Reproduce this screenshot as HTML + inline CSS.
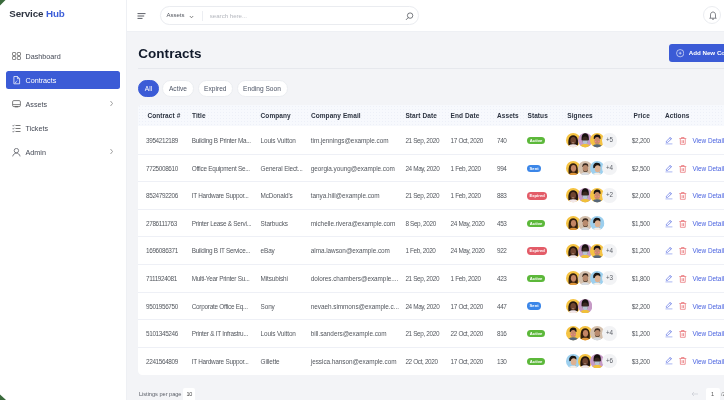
<!DOCTYPE html>
<html><head><meta charset="utf-8">
<style>
*{box-sizing:border-box;margin:0;padding:0}
html,body{width:724px;height:400px;overflow:hidden}
body{position:relative;background:#f3f4f7;will-change:transform;font-family:"Liberation Sans",sans-serif;color:#333}
.abs{position:absolute}
#side{position:absolute;left:0;top:0;width:127px;height:400px;background:#fff;border-right:1px solid #eef0f4}
.logo{position:absolute;left:9.3px;top:8.2px;font-size:9.8px;font-weight:bold;color:#2e3441;letter-spacing:-0.12px;white-space:nowrap}
.logo span{color:#3c5ed8}
.nav{position:absolute;left:6px;width:114.2px;height:17.9px;border-radius:2.5px;font-size:7.2px;color:#444955;white-space:nowrap}
.nav .lbl{position:absolute;left:19.5px;top:4.5px}
.nav.active{background:#3b5bd6;color:#fff}
.nav svg{position:absolute;left:6px;top:4.5px}
.nav .chev{position:absolute;left:103px;top:5px}
#hdr{position:absolute;left:127px;top:0;width:597px;height:32px;background:#fff;border-bottom:1px solid #eef0f4}
.search{position:absolute;left:160.4px;top:6.4px;width:258.6px;height:18.6px;border:1px solid #eaecf0;border-radius:9.3px;background:#fff}
.title{position:absolute;left:138.2px;top:45.9px;font-size:13.5px;font-weight:bold;color:#111a2b;letter-spacing:0.05px}
.hr{position:absolute;left:138px;top:68px;width:586px;height:1px;background:#e6e8ed}
.addbtn{position:absolute;left:669.3px;top:44.3px;width:80px;height:17.6px;background:#3b5bd6;border-radius:3px;color:#fff;font-size:6.2px;font-weight:bold;white-space:nowrap}
.pill{position:absolute;top:80px;height:16.6px;border-radius:8.3px;background:#fff;border:1px solid #eaecf0;font-size:6.6px;color:#4d5566;text-align:center;line-height:16.2px;white-space:nowrap}
.pill.on{background:#3b5bd6;border-color:#3b5bd6;color:#fff}
#card{position:absolute;left:138.3px;top:105.2px;width:600px;height:269.6px;background:#fff;border-radius:4.5px;overflow:hidden}
#thead{position:absolute;left:0;top:0;width:100%;height:21.3px;background-color:#f7f9fd;background-image:radial-gradient(circle,#edf0f8 0.6px,transparent 0.9px);background-size:3px 3px}
.th{position:absolute;top:105.3px;height:21px;line-height:21px;font-size:6.5px;font-weight:bold;color:#2c3340;white-space:nowrap;letter-spacing:0.08px}
.row{position:absolute;left:0;width:724px;height:27.53px}
.row .sep{position:absolute;left:138.3px;right:0;top:27px;height:1px;background:#eef0f6}
.t{position:absolute;top:0.4px;height:27.5px;line-height:27.5px;font-size:6.4px;color:#54585f;white-space:nowrap}
.dg{letter-spacing:-0.38px}
.co{letter-spacing:-0.12px}
.em{letter-spacing:-0.04px}
.dg2{letter-spacing:-0.36px}
.ti{letter-spacing:-0.26px}
.price{text-align:right;letter-spacing:-0.24px}
.vd{color:#4a63e0}
.badge{position:absolute;top:10.3px;height:7.4px;border-radius:3.7px;color:#fff;font-size:4.2px;font-weight:bold;line-height:7.4px;text-align:center}
.ba{background:#5cb83a;width:18px}
.bs{background:#3b86e8;width:14px}
.be{background:#e35c68;width:20px}
.avs{position:absolute;top:6.5px;height:14.4px;display:flex}
.av{display:block;width:14.4px;height:14.4px;margin-right:-2.3px;flex:none}
.more{display:block;width:14.4px;height:14.4px;border-radius:50%;background:#f2f3f5;color:#5a5e66;font-size:6.3px;text-align:center;line-height:14.4px;flex:none}
.ic{position:absolute;top:10.2px;width:8px;height:8px}
.ic svg{display:block}
</style></head><body>
<svg width="0" height="0" style="position:absolute"><defs><clipPath id="cc"><circle cx="10" cy="10" r="10"/></clipPath></defs></svg>
<div id="side">
  <div class="logo">Service <span>Hub</span></div>
  <div class="nav" style="top:47px">
    <svg width="9" height="8" viewBox="0 0 9 8"><rect x="0.5" y="0.5" width="3.2" height="3" rx="0.6" fill="none" stroke="#555" stroke-width="0.7"/><rect x="5.3" y="0.5" width="3.2" height="3" rx="0.6" fill="none" stroke="#555" stroke-width="0.7"/><rect x="0.5" y="4.5" width="3.2" height="3" rx="0.6" fill="none" stroke="#555" stroke-width="0.7"/><rect x="5.3" y="4.5" width="3.2" height="3" rx="0.6" fill="none" stroke="#555" stroke-width="0.7"/></svg>
    <span class="lbl">Dashboard</span></div>
  <div class="nav active" style="top:71px">
    <svg width="8" height="9" viewBox="0 0 8 9" style="left:6.6px;top:5px"><path d="M0.9 0.5 H4.6 L6.6 2.5 V7.8 H0.9 Z M4.4 0.6 V2.7 H6.5" fill="none" stroke="#fff" stroke-width="0.75" stroke-linejoin="round"/><path d="M2.2 6.6 L4.4 4.5 M2.2 6.6 H3.2" stroke="#fff" stroke-width="0.6"/></svg>
    <span class="lbl">Contracts</span></div>
  <div class="nav" style="top:95px">
    <svg width="9" height="9" viewBox="0 0 9 9"><rect x="0.6" y="0.6" width="7.8" height="6" rx="1.2" fill="none" stroke="#555" stroke-width="0.75"/><path d="M0.8 4.6 H8.2" stroke="#555" stroke-width="0.7"/><path d="M2.8 6.8 H6.2" stroke="#555" stroke-width="0.9"/></svg>
    <span class="lbl">Assets</span>
    <svg class="chev" width="5" height="7" viewBox="0 0 5 7"><path d="M1.5 1 L3.5 3.5 L1.5 6" fill="none" stroke="#777" stroke-width="0.7"/></svg></div>
  <div class="nav" style="top:119px">
    <svg width="9" height="9" viewBox="0 0 9 9"><path d="M3.5 1.5 H8.5 M3.5 4.5 H8.5 M3.5 7.5 H8.5" stroke="#555" stroke-width="0.8"/><path d="M0.6 1.6 L1.2 2.2 L2.4 0.8 M0.6 4.6 L1.2 5.2 L2.4 3.8 M0.6 7.6 L1.2 8.2 L2.4 6.8" fill="none" stroke="#4a4e56" stroke-width="0.7"/></svg>
    <span class="lbl">Tickets</span></div>
  <div class="nav" style="top:143px">
    <svg width="9" height="9" viewBox="0 0 9 9"><circle cx="4.4" cy="2.6" r="2.2" fill="none" stroke="#4a4e56" stroke-width="0.7"/><path d="M0.7 8.4 C1.1 6.3 2.6 5.2 4.4 5.2 C6.2 5.2 7.7 6.3 8.1 8.4" fill="none" stroke="#4a4e56" stroke-width="0.7"/></svg>
    <span class="lbl">Admin</span>
    <svg class="chev" width="5" height="7" viewBox="0 0 5 7"><path d="M1.5 1 L3.5 3.5 L1.5 6" fill="none" stroke="#777" stroke-width="0.7"/></svg></div>
</div>
<div id="hdr"></div>
<svg class="abs" style="left:137px;top:12.5px" width="9" height="6" viewBox="0 0 9 6"><path d="M0.5 0.6 H8.5 M0.5 3 H7.2 M0.5 5.4 H5.5" stroke="#3d414a" stroke-width="0.85"/></svg>
<div class="search">
  <span class="abs" style="left:5px;top:4.9px;font-size:6px;color:#50545c">Assets</span>
  <svg class="abs" style="left:27.3px;top:7.2px" width="5" height="4" viewBox="0 0 5 4"><path d="M0.8 1 L2.5 2.8 L4.2 1" fill="none" stroke="#555" stroke-width="0.7"/></svg>
  <div class="abs" style="left:40.6px;top:3.4px;width:1px;height:10.6px;background:#eceef2"></div>
  <span class="abs" style="left:48.4px;top:4.8px;font-size:6.1px;color:#b3b6bd">search here...</span>
  <svg class="abs" style="left:243.6px;top:4.2px" width="9" height="9" viewBox="0 0 9 9"><circle cx="5.1" cy="3.6" r="2.7" fill="none" stroke="#3f434b" stroke-width="0.7"/><path d="M3.2 5.6 L1 7.9" stroke="#3f434b" stroke-width="0.7"/></svg>
</div>
<div class="abs" style="left:703.4px;top:6.2px;width:18px;height:18px;border-radius:50%;border:1px solid #eaecf0;background:#fff"></div>
<svg class="abs" style="left:708.6px;top:10.6px" width="8" height="9" viewBox="0 0 8 9"><path d="M1.5 6.6 V3.9 C1.5 2.2 2.5 1 4 1 C5.5 1 6.5 2.2 6.5 3.9 V6.6 L7.3 7.2 H0.7 Z" fill="none" stroke="#3f434b" stroke-width="0.65" stroke-linejoin="round"/><path d="M3.1 8.2 H4.9" stroke="#3f434b" stroke-width="0.7"/></svg>

<div class="title">Contracts</div>
<div class="hr"></div>
<div class="addbtn">
  <svg class="abs" style="left:6.5px;top:5px" width="8.4" height="8.4" viewBox="0 0 9 9"><circle cx="4.5" cy="4.5" r="3.9" fill="none" stroke="#fff" stroke-width="0.65"/><path d="M4.5 2.9 V6.1 M2.9 4.5 H6.1" stroke="#fff" stroke-width="0.6"/></svg>
  <span class="abs" style="left:19.4px;top:5.2px">Add New Contract</span>
</div>
<div class="pill on" style="left:138px;width:21px">All</div>
<div class="pill" style="left:162.2px;width:31.5px">Active</div>
<div class="pill" style="left:197.9px;width:34.8px">Expired</div>
<div class="pill" style="left:236.5px;width:51px">Ending Soon</div>

<div id="card"><div id="thead"></div></div>
<div class="th" style="left:147.4px">Contract #</div>
<div class="th" style="left:192px">Title</div>
<div class="th" style="left:260.6px">Company</div>
<div class="th" style="left:310.9px">Company Email</div>
<div class="th" style="left:405.4px">Start Date</div>
<div class="th" style="left:450.6px">End Date</div>
<div class="th" style="left:497px">Assets</div>
<div class="th" style="left:527.5px">Status</div>
<div class="th" style="left:567.3px">Signees</div>
<div class="th" style="left:633.6px">Price</div>
<div class="th" style="left:665px">Actions</div>
<div class="row" style="top:126.80px"><div class="t dg" style="left:146.1px">3954212189</div><div class="t ti" style="left:191.7px">Building B Printer Ma...</div><div class="t co" style="left:260.6px">Louis Vuitton</div><div class="t em" style="left:310.8px">tim.jennings@example.com</div><div class="t dg2" style="left:405.4px">21 Sep, 2020</div><div class="t dg2" style="left:450.6px">17 Oct, 2020</div><div class="t dg" style="left:497px">740</div><div class="badge ba" style="left:527.1px">Active</div><div class="avs" style="left:566px"><svg class="av" viewBox="0 0 20 20"><g clip-path="url(#cc)"><rect width="20" height="20" fill="#f5c343"/><path d="M3.6 17 C2.5 11 3.5 3.2 10 3 C16.5 3.2 17.5 11 16.4 17 Z" fill="#24160f"/><ellipse cx="10" cy="10.4" rx="3.9" ry="4.9" fill="#6f4430"/><path d="M8.6 13.2 Q10 14 11.4 13.2" stroke="#e8d8d0" stroke-width="0.6" fill="none"/><path d="M2.5 21 C3.5 16.5 6.5 15.6 10 15.6 C13.5 15.6 16.5 16.5 17.5 21 Z" fill="#f1e6e8"/></g></svg><svg class="av" viewBox="0 0 20 20"><g clip-path="url(#cc)"><rect width="20" height="20" fill="#c69ac6"/><path d="M5 10 C4.5 2.5 7 0.5 10 0.5 C13 0.5 15.5 2.5 15 10 Z" fill="#17110e"/><ellipse cx="10" cy="9.8" rx="3.9" ry="5" fill="#3b2820"/><path d="M6.2 10.3 H13.8 C13.7 14.2 12.2 15.4 10 15.4 C7.8 15.4 6.3 14.2 6.2 10.3 Z" fill="#b6c3d0"/><path d="M2 21 C3 16.2 6.5 15.4 10 15.4 C13.5 15.4 17 16.2 18 21 Z" fill="#f0c03a"/></g></svg><svg class="av" viewBox="0 0 20 20"><g clip-path="url(#cc)"><rect width="20" height="20" fill="#f5c343"/><path d="M5.2 8.5 C4.8 3.5 7.2 2.2 10.2 2.2 C13.5 2.2 15.2 4 14.6 8.5 Z" fill="#1b1411"/><ellipse cx="10" cy="10.6" rx="3.9" ry="4.9" fill="#c98b6a"/><circle cx="7.7" cy="11.8" r="1.1" fill="#f0868a"/><circle cx="12.3" cy="11.8" r="1.1" fill="#f0868a"/><path d="M2.5 21 C3.5 16.6 6.5 15.8 10 15.8 C13.5 15.8 16.5 16.6 17.5 21 Z" fill="#56677a"/></g></svg><span class="more">+5</span></div><div class="t price" style="right:74.10000000000002px">$2,200</div><div class="ic" style="left:665px"><svg width="8" height="8" viewBox="0 0 8 8"><path d="M1.3 5.4 V4.3 L5.3 0.4 L6.7 1.7 L2.6 5.4 Z M4.6 1.1 L6 2.4" fill="none" stroke="#4a62e0" stroke-width="0.62" stroke-linejoin="round"/><path d="M0.5 6.9 H7.4" stroke="#4a62e0" stroke-width="0.55" opacity="0.85"/></svg></div><div class="ic" style="left:678.5px"><svg width="8" height="8" viewBox="0 0 8 8"><path d="M0.3 1.5 H7.3 M2.5 1.4 V0.5 H5.1 V1.4 M1.3 2 L1.4 7.3 H6.2 L6.3 2 M3.1 3.2 V6 M4.5 3.2 V6" fill="none" stroke="#e4555a" stroke-width="0.62" stroke-linejoin="round"/></svg></div><div class="t vd" style="left:692.4px">View Details</div><div class="sep"></div></div><div class="row" style="top:154.36px"><div class="t dg" style="left:146.1px">7725008610</div><div class="t ti" style="left:191.7px">Office Equipment Se...</div><div class="t co" style="left:260.6px">General Elect...</div><div class="t em" style="left:310.8px">georgia.young@example.com</div><div class="t dg2" style="left:405.4px">24 May, 2020</div><div class="t dg2" style="left:450.6px">1 Feb, 2020</div><div class="t dg" style="left:497px">994</div><div class="badge bs" style="left:527.1px">Sent</div><div class="avs" style="left:566px"><svg class="av" viewBox="0 0 20 20"><g clip-path="url(#cc)"><rect width="20" height="20" fill="#f5c343"/><path d="M3.8 18 C3 11 3.5 3 10 3 C16.5 3 17 11 16.2 18 Z" fill="#34200f"/><ellipse cx="10.4" cy="10.2" rx="3.6" ry="4.8" fill="#c48564"/><path d="M2.5 21 C4 16.8 7 16.2 10 16.2 C13 16.2 16 16.8 17.5 21 Z" fill="#df963a"/></g></svg><svg class="av" viewBox="0 0 20 20"><g clip-path="url(#cc)"><rect width="20" height="20" fill="#d4c0ad"/><path d="M6 8.2 C6 3.8 7.8 3 10.5 3 C13.3 3 14.5 4.5 14.2 8.2 Z" fill="#3a291f"/><ellipse cx="10.3" cy="10.2" rx="3.8" ry="4.8" fill="#b88a6d"/><path d="M6.6 11.5 C7.2 15.2 13.2 15.2 14 11.5 L13.6 14 C12.5 15.8 8.2 15.8 7.1 14 Z" fill="#56402f"/><path d="M2.5 21 C3.5 16.8 6.8 16 10 16 C13.2 16 16.5 16.8 17.5 21 Z" fill="#d6dbe1"/></g></svg><svg class="av" viewBox="0 0 20 20"><g clip-path="url(#cc)"><rect width="20" height="20" fill="#9ccfee"/><path d="M4.6 10 C3.8 4.5 6.5 2.6 9.6 2.6 C13 2.6 15 4 14.4 7.5 Z" fill="#1a1614"/><ellipse cx="10.6" cy="10.8" rx="4" ry="5" fill="#ddb191"/><path d="M9.5 15.5 C10.5 17 12.5 17.5 13.5 15 L14 17.5 L10 18 Z" fill="#d4a586"/><path d="M2.5 21 C4 17 7 16.4 10 16.4 C13 16.4 16 17 17.5 21 Z" fill="#f3efe9"/></g></svg><span class="more">+4</span></div><div class="t price" style="right:74.10000000000002px">$2,500</div><div class="ic" style="left:665px"><svg width="8" height="8" viewBox="0 0 8 8"><path d="M1.3 5.4 V4.3 L5.3 0.4 L6.7 1.7 L2.6 5.4 Z M4.6 1.1 L6 2.4" fill="none" stroke="#4a62e0" stroke-width="0.62" stroke-linejoin="round"/><path d="M0.5 6.9 H7.4" stroke="#4a62e0" stroke-width="0.55" opacity="0.85"/></svg></div><div class="ic" style="left:678.5px"><svg width="8" height="8" viewBox="0 0 8 8"><path d="M0.3 1.5 H7.3 M2.5 1.4 V0.5 H5.1 V1.4 M1.3 2 L1.4 7.3 H6.2 L6.3 2 M3.1 3.2 V6 M4.5 3.2 V6" fill="none" stroke="#e4555a" stroke-width="0.62" stroke-linejoin="round"/></svg></div><div class="t vd" style="left:692.4px">View Details</div><div class="sep"></div></div><div class="row" style="top:181.92px"><div class="t dg" style="left:146.1px">8524792206</div><div class="t ti" style="left:191.7px">IT Hardware Suppor...</div><div class="t co" style="left:260.6px">McDonald's</div><div class="t em" style="left:310.8px">tanya.hill@example.com</div><div class="t dg2" style="left:405.4px">21 Sep, 2020</div><div class="t dg2" style="left:450.6px">1 Feb, 2020</div><div class="t dg" style="left:497px">883</div><div class="badge be" style="left:527.1px">Expired</div><div class="avs" style="left:566px"><svg class="av" viewBox="0 0 20 20"><g clip-path="url(#cc)"><rect width="20" height="20" fill="#f5c343"/><path d="M3.6 17 C2.5 11 3.5 3.2 10 3 C16.5 3.2 17.5 11 16.4 17 Z" fill="#24160f"/><ellipse cx="10" cy="10.4" rx="3.9" ry="4.9" fill="#6f4430"/><path d="M8.6 13.2 Q10 14 11.4 13.2" stroke="#e8d8d0" stroke-width="0.6" fill="none"/><path d="M2.5 21 C3.5 16.5 6.5 15.6 10 15.6 C13.5 15.6 16.5 16.5 17.5 21 Z" fill="#f1e6e8"/></g></svg><svg class="av" viewBox="0 0 20 20"><g clip-path="url(#cc)"><rect width="20" height="20" fill="#c69ac6"/><path d="M5 10 C4.5 2.5 7 0.5 10 0.5 C13 0.5 15.5 2.5 15 10 Z" fill="#17110e"/><ellipse cx="10" cy="9.8" rx="3.9" ry="5" fill="#3b2820"/><path d="M6.2 10.3 H13.8 C13.7 14.2 12.2 15.4 10 15.4 C7.8 15.4 6.3 14.2 6.2 10.3 Z" fill="#b6c3d0"/><path d="M2 21 C3 16.2 6.5 15.4 10 15.4 C13.5 15.4 17 16.2 18 21 Z" fill="#f0c03a"/></g></svg><svg class="av" viewBox="0 0 20 20"><g clip-path="url(#cc)"><rect width="20" height="20" fill="#f5c343"/><path d="M5.2 8.5 C4.8 3.5 7.2 2.2 10.2 2.2 C13.5 2.2 15.2 4 14.6 8.5 Z" fill="#1b1411"/><ellipse cx="10" cy="10.6" rx="3.9" ry="4.9" fill="#c98b6a"/><circle cx="7.7" cy="11.8" r="1.1" fill="#f0868a"/><circle cx="12.3" cy="11.8" r="1.1" fill="#f0868a"/><path d="M2.5 21 C3.5 16.6 6.5 15.8 10 15.8 C13.5 15.8 16.5 16.6 17.5 21 Z" fill="#56677a"/></g></svg><span class="more">+2</span></div><div class="t price" style="right:74.10000000000002px">$2,000</div><div class="ic" style="left:665px"><svg width="8" height="8" viewBox="0 0 8 8"><path d="M1.3 5.4 V4.3 L5.3 0.4 L6.7 1.7 L2.6 5.4 Z M4.6 1.1 L6 2.4" fill="none" stroke="#4a62e0" stroke-width="0.62" stroke-linejoin="round"/><path d="M0.5 6.9 H7.4" stroke="#4a62e0" stroke-width="0.55" opacity="0.85"/></svg></div><div class="ic" style="left:678.5px"><svg width="8" height="8" viewBox="0 0 8 8"><path d="M0.3 1.5 H7.3 M2.5 1.4 V0.5 H5.1 V1.4 M1.3 2 L1.4 7.3 H6.2 L6.3 2 M3.1 3.2 V6 M4.5 3.2 V6" fill="none" stroke="#e4555a" stroke-width="0.62" stroke-linejoin="round"/></svg></div><div class="t vd" style="left:692.4px">View Details</div><div class="sep"></div></div><div class="row" style="top:209.48px"><div class="t dg" style="left:146.1px">2786111763</div><div class="t ti" style="left:191.7px">Printer Lease & Servi...</div><div class="t co" style="left:260.6px">Starbucks</div><div class="t em" style="left:310.8px">michelle.rivera@example.com</div><div class="t dg2" style="left:405.4px">8 Sep, 2020</div><div class="t dg2" style="left:450.6px">24 May, 2020</div><div class="t dg" style="left:497px">453</div><div class="badge ba" style="left:527.1px">Active</div><div class="avs" style="left:566px"><svg class="av" viewBox="0 0 20 20"><g clip-path="url(#cc)"><rect width="20" height="20" fill="#f5c343"/><path d="M3.8 18 C3 11 3.5 3 10 3 C16.5 3 17 11 16.2 18 Z" fill="#34200f"/><ellipse cx="10.4" cy="10.2" rx="3.6" ry="4.8" fill="#c48564"/><path d="M2.5 21 C4 16.8 7 16.2 10 16.2 C13 16.2 16 16.8 17.5 21 Z" fill="#df963a"/></g></svg><svg class="av" viewBox="0 0 20 20"><g clip-path="url(#cc)"><rect width="20" height="20" fill="#d4c0ad"/><path d="M6 8.2 C6 3.8 7.8 3 10.5 3 C13.3 3 14.5 4.5 14.2 8.2 Z" fill="#3a291f"/><ellipse cx="10.3" cy="10.2" rx="3.8" ry="4.8" fill="#b88a6d"/><path d="M6.6 11.5 C7.2 15.2 13.2 15.2 14 11.5 L13.6 14 C12.5 15.8 8.2 15.8 7.1 14 Z" fill="#56402f"/><path d="M2.5 21 C3.5 16.8 6.8 16 10 16 C13.2 16 16.5 16.8 17.5 21 Z" fill="#d6dbe1"/></g></svg><svg class="av" viewBox="0 0 20 20"><g clip-path="url(#cc)"><rect width="20" height="20" fill="#9ccfee"/><path d="M4.6 10 C3.8 4.5 6.5 2.6 9.6 2.6 C13 2.6 15 4 14.4 7.5 Z" fill="#1a1614"/><ellipse cx="10.6" cy="10.8" rx="4" ry="5" fill="#ddb191"/><path d="M9.5 15.5 C10.5 17 12.5 17.5 13.5 15 L14 17.5 L10 18 Z" fill="#d4a586"/><path d="M2.5 21 C4 17 7 16.4 10 16.4 C13 16.4 16 17 17.5 21 Z" fill="#f3efe9"/></g></svg></div><div class="t price" style="right:74.10000000000002px">$1,500</div><div class="ic" style="left:665px"><svg width="8" height="8" viewBox="0 0 8 8"><path d="M1.3 5.4 V4.3 L5.3 0.4 L6.7 1.7 L2.6 5.4 Z M4.6 1.1 L6 2.4" fill="none" stroke="#4a62e0" stroke-width="0.62" stroke-linejoin="round"/><path d="M0.5 6.9 H7.4" stroke="#4a62e0" stroke-width="0.55" opacity="0.85"/></svg></div><div class="ic" style="left:678.5px"><svg width="8" height="8" viewBox="0 0 8 8"><path d="M0.3 1.5 H7.3 M2.5 1.4 V0.5 H5.1 V1.4 M1.3 2 L1.4 7.3 H6.2 L6.3 2 M3.1 3.2 V6 M4.5 3.2 V6" fill="none" stroke="#e4555a" stroke-width="0.62" stroke-linejoin="round"/></svg></div><div class="t vd" style="left:692.4px">View Details</div><div class="sep"></div></div><div class="row" style="top:237.04px"><div class="t dg" style="left:146.1px">1696086371</div><div class="t ti" style="left:191.7px">Building B IT Service...</div><div class="t co" style="left:260.6px">eBay</div><div class="t em" style="left:310.8px">alma.lawson@example.com</div><div class="t dg2" style="left:405.4px">1 Feb, 2020</div><div class="t dg2" style="left:450.6px">24 May, 2020</div><div class="t dg" style="left:497px">922</div><div class="badge be" style="left:527.1px">Expired</div><div class="avs" style="left:566px"><svg class="av" viewBox="0 0 20 20"><g clip-path="url(#cc)"><rect width="20" height="20" fill="#f5c343"/><path d="M3.6 17 C2.5 11 3.5 3.2 10 3 C16.5 3.2 17.5 11 16.4 17 Z" fill="#24160f"/><ellipse cx="10" cy="10.4" rx="3.9" ry="4.9" fill="#6f4430"/><path d="M8.6 13.2 Q10 14 11.4 13.2" stroke="#e8d8d0" stroke-width="0.6" fill="none"/><path d="M2.5 21 C3.5 16.5 6.5 15.6 10 15.6 C13.5 15.6 16.5 16.5 17.5 21 Z" fill="#f1e6e8"/></g></svg><svg class="av" viewBox="0 0 20 20"><g clip-path="url(#cc)"><rect width="20" height="20" fill="#c69ac6"/><path d="M5 10 C4.5 2.5 7 0.5 10 0.5 C13 0.5 15.5 2.5 15 10 Z" fill="#17110e"/><ellipse cx="10" cy="9.8" rx="3.9" ry="5" fill="#3b2820"/><path d="M6.2 10.3 H13.8 C13.7 14.2 12.2 15.4 10 15.4 C7.8 15.4 6.3 14.2 6.2 10.3 Z" fill="#b6c3d0"/><path d="M2 21 C3 16.2 6.5 15.4 10 15.4 C13.5 15.4 17 16.2 18 21 Z" fill="#f0c03a"/></g></svg><svg class="av" viewBox="0 0 20 20"><g clip-path="url(#cc)"><rect width="20" height="20" fill="#f5c343"/><path d="M5.2 8.5 C4.8 3.5 7.2 2.2 10.2 2.2 C13.5 2.2 15.2 4 14.6 8.5 Z" fill="#1b1411"/><ellipse cx="10" cy="10.6" rx="3.9" ry="4.9" fill="#c98b6a"/><circle cx="7.7" cy="11.8" r="1.1" fill="#f0868a"/><circle cx="12.3" cy="11.8" r="1.1" fill="#f0868a"/><path d="M2.5 21 C3.5 16.6 6.5 15.8 10 15.8 C13.5 15.8 16.5 16.6 17.5 21 Z" fill="#56677a"/></g></svg><span class="more">+4</span></div><div class="t price" style="right:74.10000000000002px">$1,200</div><div class="ic" style="left:665px"><svg width="8" height="8" viewBox="0 0 8 8"><path d="M1.3 5.4 V4.3 L5.3 0.4 L6.7 1.7 L2.6 5.4 Z M4.6 1.1 L6 2.4" fill="none" stroke="#4a62e0" stroke-width="0.62" stroke-linejoin="round"/><path d="M0.5 6.9 H7.4" stroke="#4a62e0" stroke-width="0.55" opacity="0.85"/></svg></div><div class="ic" style="left:678.5px"><svg width="8" height="8" viewBox="0 0 8 8"><path d="M0.3 1.5 H7.3 M2.5 1.4 V0.5 H5.1 V1.4 M1.3 2 L1.4 7.3 H6.2 L6.3 2 M3.1 3.2 V6 M4.5 3.2 V6" fill="none" stroke="#e4555a" stroke-width="0.62" stroke-linejoin="round"/></svg></div><div class="t vd" style="left:692.4px">View Details</div><div class="sep"></div></div><div class="row" style="top:264.60px"><div class="t dg" style="left:146.1px">7111924081</div><div class="t ti" style="left:191.7px">Multi-Year Printer Su...</div><div class="t co" style="left:260.6px">Mitsubishi</div><div class="t em" style="left:310.8px">dolores.chambers@example....</div><div class="t dg2" style="left:405.4px">21 Sep, 2020</div><div class="t dg2" style="left:450.6px">1 Feb, 2020</div><div class="t dg" style="left:497px">423</div><div class="badge ba" style="left:527.1px">Active</div><div class="avs" style="left:566px"><svg class="av" viewBox="0 0 20 20"><g clip-path="url(#cc)"><rect width="20" height="20" fill="#f5c343"/><path d="M3.8 18 C3 11 3.5 3 10 3 C16.5 3 17 11 16.2 18 Z" fill="#34200f"/><ellipse cx="10.4" cy="10.2" rx="3.6" ry="4.8" fill="#c48564"/><path d="M2.5 21 C4 16.8 7 16.2 10 16.2 C13 16.2 16 16.8 17.5 21 Z" fill="#df963a"/></g></svg><svg class="av" viewBox="0 0 20 20"><g clip-path="url(#cc)"><rect width="20" height="20" fill="#d4c0ad"/><path d="M6 8.2 C6 3.8 7.8 3 10.5 3 C13.3 3 14.5 4.5 14.2 8.2 Z" fill="#3a291f"/><ellipse cx="10.3" cy="10.2" rx="3.8" ry="4.8" fill="#b88a6d"/><path d="M6.6 11.5 C7.2 15.2 13.2 15.2 14 11.5 L13.6 14 C12.5 15.8 8.2 15.8 7.1 14 Z" fill="#56402f"/><path d="M2.5 21 C3.5 16.8 6.8 16 10 16 C13.2 16 16.5 16.8 17.5 21 Z" fill="#d6dbe1"/></g></svg><svg class="av" viewBox="0 0 20 20"><g clip-path="url(#cc)"><rect width="20" height="20" fill="#9ccfee"/><path d="M4.6 10 C3.8 4.5 6.5 2.6 9.6 2.6 C13 2.6 15 4 14.4 7.5 Z" fill="#1a1614"/><ellipse cx="10.6" cy="10.8" rx="4" ry="5" fill="#ddb191"/><path d="M9.5 15.5 C10.5 17 12.5 17.5 13.5 15 L14 17.5 L10 18 Z" fill="#d4a586"/><path d="M2.5 21 C4 17 7 16.4 10 16.4 C13 16.4 16 17 17.5 21 Z" fill="#f3efe9"/></g></svg><span class="more">+3</span></div><div class="t price" style="right:74.10000000000002px">$1,800</div><div class="ic" style="left:665px"><svg width="8" height="8" viewBox="0 0 8 8"><path d="M1.3 5.4 V4.3 L5.3 0.4 L6.7 1.7 L2.6 5.4 Z M4.6 1.1 L6 2.4" fill="none" stroke="#4a62e0" stroke-width="0.62" stroke-linejoin="round"/><path d="M0.5 6.9 H7.4" stroke="#4a62e0" stroke-width="0.55" opacity="0.85"/></svg></div><div class="ic" style="left:678.5px"><svg width="8" height="8" viewBox="0 0 8 8"><path d="M0.3 1.5 H7.3 M2.5 1.4 V0.5 H5.1 V1.4 M1.3 2 L1.4 7.3 H6.2 L6.3 2 M3.1 3.2 V6 M4.5 3.2 V6" fill="none" stroke="#e4555a" stroke-width="0.62" stroke-linejoin="round"/></svg></div><div class="t vd" style="left:692.4px">View Details</div><div class="sep"></div></div><div class="row" style="top:292.16px"><div class="t dg" style="left:146.1px">9501956750</div><div class="t ti" style="left:191.7px">Corporate Office Eq...</div><div class="t co" style="left:260.6px">Sony</div><div class="t em" style="left:310.8px">nevaeh.simmons@example.c...</div><div class="t dg2" style="left:405.4px">24 May, 2020</div><div class="t dg2" style="left:450.6px">17 Oct, 2020</div><div class="t dg" style="left:497px">447</div><div class="badge bs" style="left:527.1px">Sent</div><div class="avs" style="left:566px"><svg class="av" viewBox="0 0 20 20"><g clip-path="url(#cc)"><rect width="20" height="20" fill="#f5c343"/><path d="M3.6 17 C2.5 11 3.5 3.2 10 3 C16.5 3.2 17.5 11 16.4 17 Z" fill="#24160f"/><ellipse cx="10" cy="10.4" rx="3.9" ry="4.9" fill="#6f4430"/><path d="M8.6 13.2 Q10 14 11.4 13.2" stroke="#e8d8d0" stroke-width="0.6" fill="none"/><path d="M2.5 21 C3.5 16.5 6.5 15.6 10 15.6 C13.5 15.6 16.5 16.5 17.5 21 Z" fill="#f1e6e8"/></g></svg><svg class="av" viewBox="0 0 20 20"><g clip-path="url(#cc)"><rect width="20" height="20" fill="#c69ac6"/><path d="M5 10 C4.5 2.5 7 0.5 10 0.5 C13 0.5 15.5 2.5 15 10 Z" fill="#17110e"/><ellipse cx="10" cy="9.8" rx="3.9" ry="5" fill="#3b2820"/><path d="M6.2 10.3 H13.8 C13.7 14.2 12.2 15.4 10 15.4 C7.8 15.4 6.3 14.2 6.2 10.3 Z" fill="#b6c3d0"/><path d="M2 21 C3 16.2 6.5 15.4 10 15.4 C13.5 15.4 17 16.2 18 21 Z" fill="#f0c03a"/></g></svg></div><div class="t price" style="right:74.10000000000002px">$2,200</div><div class="ic" style="left:665px"><svg width="8" height="8" viewBox="0 0 8 8"><path d="M1.3 5.4 V4.3 L5.3 0.4 L6.7 1.7 L2.6 5.4 Z M4.6 1.1 L6 2.4" fill="none" stroke="#4a62e0" stroke-width="0.62" stroke-linejoin="round"/><path d="M0.5 6.9 H7.4" stroke="#4a62e0" stroke-width="0.55" opacity="0.85"/></svg></div><div class="ic" style="left:678.5px"><svg width="8" height="8" viewBox="0 0 8 8"><path d="M0.3 1.5 H7.3 M2.5 1.4 V0.5 H5.1 V1.4 M1.3 2 L1.4 7.3 H6.2 L6.3 2 M3.1 3.2 V6 M4.5 3.2 V6" fill="none" stroke="#e4555a" stroke-width="0.62" stroke-linejoin="round"/></svg></div><div class="t vd" style="left:692.4px">View Details</div><div class="sep"></div></div><div class="row" style="top:319.72px"><div class="t dg" style="left:146.1px">5101345246</div><div class="t ti" style="left:191.7px">Printer & IT Infrastru...</div><div class="t co" style="left:260.6px">Louis Vuitton</div><div class="t em" style="left:310.8px">bill.sanders@example.com</div><div class="t dg2" style="left:405.4px">21 Sep, 2020</div><div class="t dg2" style="left:450.6px">22 Oct, 2020</div><div class="t dg" style="left:497px">816</div><div class="badge ba" style="left:527.1px">Active</div><div class="avs" style="left:566px"><svg class="av" viewBox="0 0 20 20"><g clip-path="url(#cc)"><rect width="20" height="20" fill="#f5c343"/><path d="M5.2 8.5 C4.8 3.5 7.2 2.2 10.2 2.2 C13.5 2.2 15.2 4 14.6 8.5 Z" fill="#1b1411"/><ellipse cx="10" cy="10.6" rx="3.9" ry="4.9" fill="#c98b6a"/><circle cx="7.7" cy="11.8" r="1.1" fill="#f0868a"/><circle cx="12.3" cy="11.8" r="1.1" fill="#f0868a"/><path d="M2.5 21 C3.5 16.6 6.5 15.8 10 15.8 C13.5 15.8 16.5 16.6 17.5 21 Z" fill="#56677a"/></g></svg><svg class="av" viewBox="0 0 20 20"><g clip-path="url(#cc)"><rect width="20" height="20" fill="#f5c343"/><path d="M3.8 18 C3 11 3.5 3 10 3 C16.5 3 17 11 16.2 18 Z" fill="#34200f"/><ellipse cx="10.4" cy="10.2" rx="3.6" ry="4.8" fill="#c48564"/><path d="M2.5 21 C4 16.8 7 16.2 10 16.2 C13 16.2 16 16.8 17.5 21 Z" fill="#df963a"/></g></svg><svg class="av" viewBox="0 0 20 20"><g clip-path="url(#cc)"><rect width="20" height="20" fill="#d4c0ad"/><path d="M6 8.2 C6 3.8 7.8 3 10.5 3 C13.3 3 14.5 4.5 14.2 8.2 Z" fill="#3a291f"/><ellipse cx="10.3" cy="10.2" rx="3.8" ry="4.8" fill="#b88a6d"/><path d="M6.6 11.5 C7.2 15.2 13.2 15.2 14 11.5 L13.6 14 C12.5 15.8 8.2 15.8 7.1 14 Z" fill="#56402f"/><path d="M2.5 21 C3.5 16.8 6.8 16 10 16 C13.2 16 16.5 16.8 17.5 21 Z" fill="#d6dbe1"/></g></svg><span class="more">+4</span></div><div class="t price" style="right:74.10000000000002px">$1,200</div><div class="ic" style="left:665px"><svg width="8" height="8" viewBox="0 0 8 8"><path d="M1.3 5.4 V4.3 L5.3 0.4 L6.7 1.7 L2.6 5.4 Z M4.6 1.1 L6 2.4" fill="none" stroke="#4a62e0" stroke-width="0.62" stroke-linejoin="round"/><path d="M0.5 6.9 H7.4" stroke="#4a62e0" stroke-width="0.55" opacity="0.85"/></svg></div><div class="ic" style="left:678.5px"><svg width="8" height="8" viewBox="0 0 8 8"><path d="M0.3 1.5 H7.3 M2.5 1.4 V0.5 H5.1 V1.4 M1.3 2 L1.4 7.3 H6.2 L6.3 2 M3.1 3.2 V6 M4.5 3.2 V6" fill="none" stroke="#e4555a" stroke-width="0.62" stroke-linejoin="round"/></svg></div><div class="t vd" style="left:692.4px">View Details</div><div class="sep"></div></div><div class="row" style="top:347.28px"><div class="t dg" style="left:146.1px">2241564809</div><div class="t ti" style="left:191.7px">IT Hardware Suppor...</div><div class="t co" style="left:260.6px">Gillette</div><div class="t em" style="left:310.8px">jessica.hanson@example.com</div><div class="t dg2" style="left:405.4px">22 Oct, 2020</div><div class="t dg2" style="left:450.6px">17 Oct, 2020</div><div class="t dg" style="left:497px">130</div><div class="badge ba" style="left:527.1px">Active</div><div class="avs" style="left:566px"><svg class="av" viewBox="0 0 20 20"><g clip-path="url(#cc)"><rect width="20" height="20" fill="#9ccfee"/><path d="M4.6 10 C3.8 4.5 6.5 2.6 9.6 2.6 C13 2.6 15 4 14.4 7.5 Z" fill="#1a1614"/><ellipse cx="10.6" cy="10.8" rx="4" ry="5" fill="#ddb191"/><path d="M9.5 15.5 C10.5 17 12.5 17.5 13.5 15 L14 17.5 L10 18 Z" fill="#d4a586"/><path d="M2.5 21 C4 17 7 16.4 10 16.4 C13 16.4 16 17 17.5 21 Z" fill="#f3efe9"/></g></svg><svg class="av" viewBox="0 0 20 20"><g clip-path="url(#cc)"><rect width="20" height="20" fill="#f5c343"/><path d="M3.6 17 C2.5 11 3.5 3.2 10 3 C16.5 3.2 17.5 11 16.4 17 Z" fill="#24160f"/><ellipse cx="10" cy="10.4" rx="3.9" ry="4.9" fill="#6f4430"/><path d="M8.6 13.2 Q10 14 11.4 13.2" stroke="#e8d8d0" stroke-width="0.6" fill="none"/><path d="M2.5 21 C3.5 16.5 6.5 15.6 10 15.6 C13.5 15.6 16.5 16.5 17.5 21 Z" fill="#f1e6e8"/></g></svg><svg class="av" viewBox="0 0 20 20"><g clip-path="url(#cc)"><rect width="20" height="20" fill="#c69ac6"/><path d="M5 10 C4.5 2.5 7 0.5 10 0.5 C13 0.5 15.5 2.5 15 10 Z" fill="#17110e"/><ellipse cx="10" cy="9.8" rx="3.9" ry="5" fill="#3b2820"/><path d="M6.2 10.3 H13.8 C13.7 14.2 12.2 15.4 10 15.4 C7.8 15.4 6.3 14.2 6.2 10.3 Z" fill="#b6c3d0"/><path d="M2 21 C3 16.2 6.5 15.4 10 15.4 C13.5 15.4 17 16.2 18 21 Z" fill="#f0c03a"/></g></svg><span class="more">+6</span></div><div class="t price" style="right:74.10000000000002px">$3,200</div><div class="ic" style="left:665px"><svg width="8" height="8" viewBox="0 0 8 8"><path d="M1.3 5.4 V4.3 L5.3 0.4 L6.7 1.7 L2.6 5.4 Z M4.6 1.1 L6 2.4" fill="none" stroke="#4a62e0" stroke-width="0.62" stroke-linejoin="round"/><path d="M0.5 6.9 H7.4" stroke="#4a62e0" stroke-width="0.55" opacity="0.85"/></svg></div><div class="ic" style="left:678.5px"><svg width="8" height="8" viewBox="0 0 8 8"><path d="M0.3 1.5 H7.3 M2.5 1.4 V0.5 H5.1 V1.4 M1.3 2 L1.4 7.3 H6.2 L6.3 2 M3.1 3.2 V6 M4.5 3.2 V6" fill="none" stroke="#e4555a" stroke-width="0.62" stroke-linejoin="round"/></svg></div><div class="t vd" style="left:692.4px">View Details</div></div>

<div class="abs" style="left:139px;top:390.8px;font-size:5.7px;color:#5d616a;white-space:nowrap;letter-spacing:-0.05px">Listings per page</div>
<div class="abs" style="left:183px;top:387.6px;width:12px;height:14px;background:#fff;border-radius:2px"></div>
<div class="abs" style="left:186.6px;top:390.6px;font-size:5.5px;color:#444;letter-spacing:-0.3px">10</div>
<svg class="abs" style="left:690.8px;top:390.5px" width="8" height="6" viewBox="0 0 8 6"><path d="M7 3 H1 M3 1 L1 3 L3 5" fill="none" stroke="#c8cbd2" stroke-width="0.7"/></svg>
<div class="abs" style="left:705.8px;top:388px;width:14px;height:14px;background:#fff;border-radius:2px"></div>
<div class="abs" style="left:711px;top:390.8px;font-size:5.6px;color:#555">1</div>
<div class="abs" style="left:721px;top:390.8px;font-size:5.6px;color:#777">/2</div>

<svg class="abs" style="left:0;top:0" width="8" height="8"><path d="M0 0 H5.5 L0 5.5 Z" fill="#3a6a3c"/></svg>
<svg class="abs" style="left:0;top:392px" width="8" height="8"><path d="M0 2.5 L6 8 H0 Z" fill="#3a6a3c"/></svg>
</body></html>
